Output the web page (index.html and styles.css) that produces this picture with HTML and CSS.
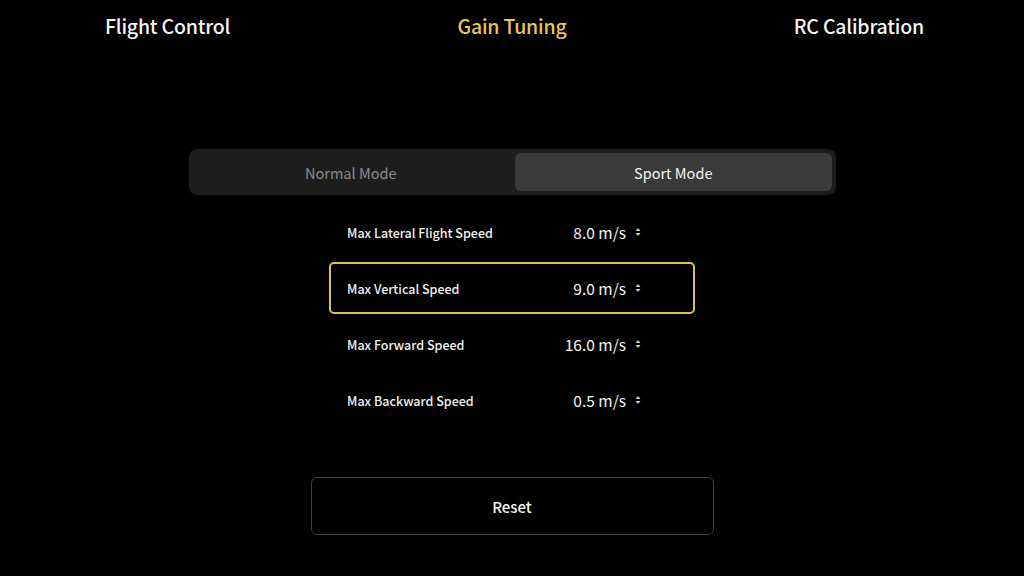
FILE: index.html
```html
<!DOCTYPE html>
<html>
<head>
<meta charset="utf-8">
<link rel="stylesheet" href="styles.css">
</head>
<body>
<div class="page">
  <nav class="tabs">
    <span class="tab">Flight Control</span>
    <span class="tab active">Gain Tuning</span>
    <span class="tab">RC Calibration</span>
  </nav>

  <div class="segmented">
    <div class="seg">Normal Mode</div>
    <div class="seg on">Sport Mode</div>
  </div>

  <div class="rows">
    <div class="row">
      <span class="label">Max Lateral Flight Speed</span>
      <span class="value">8.0 m/s</span>
      <svg class="stepper" width="6" height="10" viewBox="0 0 6 10"><path d="M3 1L5.5 4H0.5Z M3 9L5.5 6H0.5Z" fill="#cfcfcf"/></svg>
    </div>
    <div class="row selected">
      <span class="label">Max Vertical Speed</span>
      <span class="value">9.0 m/s</span>
      <svg class="stepper" width="6" height="10" viewBox="0 0 6 10"><path d="M3 1L5.5 4H0.5Z M3 9L5.5 6H0.5Z" fill="#cfcfcf"/></svg>
    </div>
    <div class="row">
      <span class="label">Max Forward Speed</span>
      <span class="value">16.0 m/s</span>
      <svg class="stepper" width="6" height="10" viewBox="0 0 6 10"><path d="M3 1L5.5 4H0.5Z M3 9L5.5 6H0.5Z" fill="#cfcfcf"/></svg>
    </div>
    <div class="row">
      <span class="label">Max Backward Speed</span>
      <span class="value">0.5 m/s</span>
      <svg class="stepper" width="6" height="10" viewBox="0 0 6 10"><path d="M3 1L5.5 4H0.5Z M3 9L5.5 6H0.5Z" fill="#cfcfcf"/></svg>
    </div>
  </div>

  <button class="reset">Reset</button>
</div>
</body>
</html>
```

FILE: styles.css
```css
html, body {
  margin: 0;
  padding: 0;
  background: #000;
}
body {
  width: 1024px;
  height: 576px;
  overflow: hidden;
  font-family: "Noto Sans CJK SC", "Noto Sans", sans-serif;
  color: #f2f2f2;
}
.page {
  display: flex;
  flex-direction: column;
  align-items: center;
}
.tabs {
  align-self: stretch;
  display: flex;
  justify-content: space-between;
  align-items: center;
  height: 51px;
  padding: 0 100px 0 105px;
}
.tab {
  font-size: 19.5px;
  font-weight: 500;
  color: #f4f4f4;
  letter-spacing: -0.2px;
}
.tab.active {
  color: #e9c65c;
}
.segmented {
  margin-top: 98px;
  width: 647px;
  height: 46px;
  box-sizing: border-box;
  padding: 4px;
  background: #1d1d1d;
  border-radius: 8px;
  display: flex;
  gap: 6px;
}
.seg {
  flex: 1;
  display: flex;
  align-items: center;
  justify-content: center;
  font-size: 14.5px;
  color: #8c8c8c;
  border-radius: 6px;
}
.seg.on {
  background: #3a3a3a;
  color: #f4f4f4;
}
.rows {
  margin-top: 11px;
  width: 366px;
  display: flex;
  flex-direction: column;
  gap: 4px;
}
.row {
  height: 52px;
  box-sizing: border-box;
  display: flex;
  align-items: center;
  padding: 0 52px 0 16px;
  border: 2px solid transparent;
  border-radius: 5px;
}
.row.selected {
  border-color: #dcc05e;
}
.label {
  flex: 1;
  font-size: 12.5px;
  font-weight: 500;
  color: #f0f0f0;
}
.value {
  font-size: 15.5px;
  color: #f4f4f4;
}
.stepper {
  margin-left: 9px;
}
.reset {
  margin-top: 51px;
  width: 403px;
  height: 58px;
  background: #000;
  border: 1.5px solid #3e3e3e;
  border-radius: 6px;
  color: #f2f2f2;
  font-family: "Noto Sans CJK SC", "Noto Sans", sans-serif;
  font-size: 15px;
  font-weight: 500;
}
```
